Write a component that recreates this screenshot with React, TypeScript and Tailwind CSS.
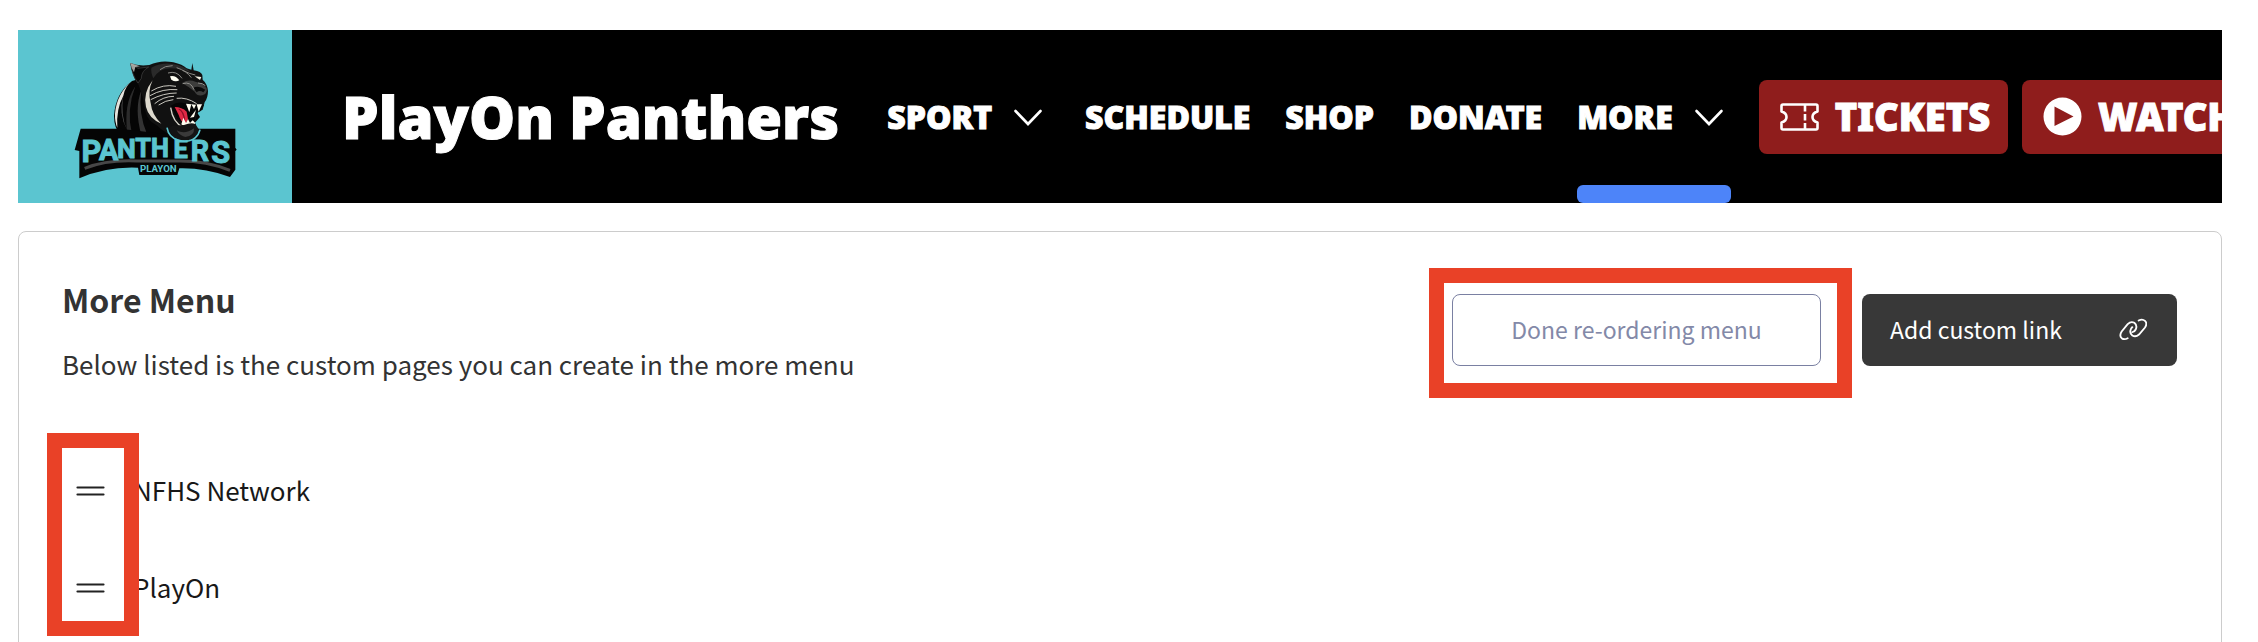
import type { ReactNode } from "react";

function PanthersLogo() {
  const letters = [
    { c: "P", x: 64, y: 336, s: 92 },
    { c: "A", x: 116, y: 330, s: 86 },
    { c: "N", x: 169, y: 324, s: 80 },
    { c: "T", x: 219, y: 319, s: 76 },
    { c: "H", x: 270, y: 319, s: 76 },
    { c: "E", x: 332, y: 323, s: 76 },
    { c: "R", x: 390, y: 331, s: 86 },
    { c: "S", x: 452, y: 338, s: 92 },
  ];
  return (
    <svg viewBox="0 -10 510 420" className="h-[140px] w-[170px]" role="img" aria-label="PlayOn Panthers logo">
      <path d="M186 92Q136 130 132 196Q132 232 152 256L320 280L390 200L300 60Z" fill="#050505" />
      <path d="M188 90Q140 130 135 190Q134 214 142 232Q138 176 160 136Q164 110 188 90Z" fill="#e5e3dc" />
      <path d="M160 136Q150 196 172 240Q144 190 160 136Z" fill="#555" />
      <path d="M196 108Q160 160 172 250L186 252Q168 180 196 108Z" fill="#2b2b2b" />
      <path d="M214 120Q192 176 214 254L232 254Q204 190 214 120Z" fill="#333" />
      <path
        d="M181 38Q204 48 238 44Q272 28 310 36Q338 42 350 54L364 58L367 38L371 60Q394 64 397 74L398 88Q412 100 414 122Q414 142 404 156L398 178L384 186L374 216Q382 226 378 242Q372 262 350 270Q326 274 310 258Q280 244 262 226Q232 212 226 182L218 140L206 104Q188 84 181 38Z"
        fill="#111"
      />
      <path d="M182 40L204 54L236 50Q214 62 214 84L204 98Q186 74 182 40Z" fill="#060606" stroke="#444" strokeWidth="2" />
      <path d="M181 38L210 48L196 50L192 66Q184 54 181 38Z" fill="#c9c7c0" opacity=".8" />
      <path d="M244 52Q282 32 324 44Q350 52 362 66Q336 54 300 54Q268 54 250 84Q242 66 244 52Z" fill="#2a2a2a" />
      <path d="M248 90Q218 128 228 170Q236 204 274 220Q246 194 242 158Q232 122 248 90Z" fill="#ddd9cd" />
      <path d="M270 58Q284 46 308 46M320 52Q350 62 364 82M338 60Q362 72 376 74M294 68Q320 60 336 84" fill="none" stroke="#8a8985" strokeWidth="3" />
      <path d="M300 78Q316 74 328 90Q316 96 304 88Z" fill="#fffef3" />
      <path d="M374 78L394 80L390 89Z" fill="#f2efe2" />
      <path d="M336 98Q356 86 376 94Q400 98 410 114Q412 126 404 132Q384 142 374 124Q358 110 336 98Z" fill="#3d3d3c" />
      <path d="M370 112Q386 104 406 118L400 126Q388 118 380 126Z" fill="#0a0a0a" />
      <path d="M338 100Q362 92 372 118M384 98Q398 98 406 106" fill="none" stroke="#92918d" strokeWidth="3" />
      <g fill="none" stroke="#eeece2" strokeWidth="2.500">
        <path d="M318 108Q280 100 244 122" />
        <path d="M322 118Q278 114 240 136" />
        <path d="M320 128Q280 128 242 148" />
        <path d="M312 138Q280 138 254 160" />
        <path d="M310 148Q286 150 266 164" />
        <path d="M320 144Q350 140 380 160" />
      </g>
      <path d="M302 166Q330 148 358 164L402 164L392 182L376 190L374 218Q344 228 322 206Z" fill="#050505" />
      <path d="M314 170Q336 170 350 184L354 206L346 222Q332 214 326 194Z" fill="#e02945" />
      <path d="M326 176Q342 182 344 214" fill="none" stroke="#8f1027" strokeWidth="4" />
      <g fill="#fffdf0">
        <path d="M348 160L364 162L358 186Z" />
        <path d="M364 162L378 163L372 176Z" />
        <path d="M380 162L396 162L386 184Z" />
        <path d="M378 178L372 200L360 202Z" />
        <path d="M334 222L340 202L348 218L354 206L360 218L368 210L376 218L370 226L342 228Z" />
      </g>
      <path d="M302 172Q308 216 340 232Q362 236 378 226" fill="none" stroke="#d9d6cc" strokeWidth="4" />
      <path
        d="M32 235H150L290 252L302 244Q316 272 350 272Q374 262 384 235H496V292L500 298L496 302V358L480 380Q404 352 328 354L322 374H208L204 352Q110 348 28 384V302L14 299Z"
        fill="#050505"
      />
      <path d="M44 354Q110 328 200 332H330Q410 332 480 360" fill="none" stroke="#474747" strokeWidth="9" />
      <g fill="#5bc5d0" stroke="#5bc5d0" strokeWidth="3" fontFamily="'Roboto',sans-serif" fontWeight="700" textAnchor="middle">
        {letters.map((l) => (
          <text key={l.c} x={l.x} y={l.y} fontSize={l.s}>
            {l.c}
          </text>
        ))}
        <text x="265" y="366" fontSize="29" strokeWidth="0">
          PLAYON
        </text>
      </g>
      <path d="M296 234Q300 258 326 268Q354 274 372 262Q384 252 386 236L376 222Q366 214 342 224L306 226Z" fill="#141414" />
      <path d="M320 240Q344 254 372 234Q374 256 346 260Q328 256 320 240Z" fill="#3a3a3a" />
      <path d="M291 232Q296 262 326 270Q358 278 376 262Q386 254 390 238" fill="none" stroke="#5bc5d0" strokeWidth="5" />
    </svg>
  );
}

function Chevron() {
  return (
    <svg viewBox="0 0 44 44" className="size-11" fill="none" stroke="currentColor" strokeWidth="2.600" strokeLinecap="round" aria-hidden="true">
      <path d="M9.500 16L22 29L34.500 16" />
    </svg>
  );
}

function TicketIcon() {
  return (
    <svg viewBox="0 0 39 28" className="h-7 w-[39px]" fill="none" stroke="currentColor" strokeWidth="2.600" strokeLinejoin="round" aria-hidden="true">
      <path d="M3 1.500H36Q37.500 1.500 37.500 3V8.500Q32.500 10 32.500 14T37.500 19.500V25Q37.500 26.500 36 26.500H3Q1.500 26.500 1.500 25V19.500Q6.500 18 6.500 14T1.500 8.500V3Q1.500 1.500 3 1.500Z" />
      <path d="M25 2V8.500M25 11V17.500M25 20V26" />
    </svg>
  );
}

function PlayIcon() {
  return (
    <svg viewBox="0 0 39 39" className="size-[39px]" aria-hidden="true">
      <path fillRule="evenodd" fill="currentColor" d="M19.500 .5A19 19 0 1 1 19.500 38.500A19 19 0 1 1 19.500 .5ZM11.500 9.500V29L30.500 19.500Z" />
    </svg>
  );
}

function LinkIcon() {
  return (
    <svg viewBox="88 92 84 68" className="h-[23px] w-7" fill="none" stroke="currentColor" strokeWidth="5.500" strokeLinecap="round" aria-hidden="true">
      <path d="M114 152Q104 158 96 152Q88 144 96 132L114 110Q124 100 134 106Q144 114 138 126Q134 134 128 134" />
      <path d="M147 99Q158 93 166 100Q174 108 166 120L148 141Q138 150 128 144Q118 136 124 124Q126 120 128 119" />
    </svg>
  );
}

function NavLink({ label, menu, active }: { label: string; menu?: boolean; active?: boolean }) {
  return (
    <a href="#" className="relative flex h-full items-center gap-[14px]">
      {label}
      {menu && <Chevron />}
      {active && <span className="absolute inset-x-0 bottom-0 h-[18px] rounded-md bg-[#4d84f9]" />}
    </a>
  );
}

function ActionButton({ label, icon }: { label: string; icon: ReactNode }) {
  return (
    <button type="button" className="flex h-[74px] items-center gap-4 rounded-lg bg-[#8f1d1c] pr-[18px] pl-[21px] text-[38px] font-black">
      {icon}
      {label}
    </button>
  );
}

function MenuRow({ label }: { label: string }) {
  return (
    <li className="flex h-[97px] items-center gap-7 text-[26px] text-[#181818]">
      <button type="button" aria-label={`Move ${label}`} className="ml-[14px] pt-0.5">
        <svg viewBox="0 0 29 12" className="h-3 w-[29px]" stroke="#222" strokeWidth="2.200" strokeLinecap="round" aria-hidden="true">
          <path d="M1.500 2.500H27.500M1.500 9.500H27.500" />
        </svg>
      </button>
      {label}
    </li>
  );
}

export default function App() {
  return (
    <div className="h-screen overflow-hidden bg-white pt-[30px] pr-9 pl-[18px] font-['Noto_Sans_CJK_SC',sans-serif]">
      <header className="flex h-[173px] items-center overflow-hidden bg-black font-['Noto_Sans',sans-serif] whitespace-nowrap text-white [-webkit-text-stroke:1px_white] *:shrink-0">
        <a href="#" className="flex h-full w-[274px] items-center justify-center bg-[#5bc5d0] [-webkit-text-stroke:0px]">
          <PanthersLogo />
        </a>
        <h1 className="ml-[50px] text-[58px] font-black">PlayOn Panthers</h1>
        <nav className="ml-12 flex h-full items-center gap-[35px] text-[32px] font-black">
          <NavLink label="SPORT" menu />
          <NavLink label="SCHEDULE" />
          <NavLink label="SHOP" />
          <NavLink label="DONATE" />
          <NavLink label="MORE" menu active />
        </nav>
        <div className="ml-7 flex items-center gap-[14px]">
          <ActionButton label="TICKETS" icon={<TicketIcon />} />
          <ActionButton label="WATCH" icon={<PlayIcon />} />
        </div>
      </header>

      <main className="mt-7 min-h-screen rounded-lg border border-[#ccc] pt-[46px] pr-11 pl-[43px]">
        <div className="flex items-start justify-between">
          <div className="text-[#333]">
            <h2 className="text-[32px] leading-[42px] font-bold">More Menu</h2>
            <p className="mt-6 text-[26px] leading-10">Below listed is the custom pages you can create in the more menu</p>
          </div>
          <div className="mt-4 flex gap-[41px] text-[23px]">
            <div className="relative">
              <button type="button" className="h-[72px] w-[369px] rounded-lg border border-[#7a80a2] pb-0.5 text-[#8389a8]">
                Done re-ordering menu
              </button>
              <span className="pointer-events-none absolute -top-[26px] -right-[31px] -bottom-8 -left-[23px] border-[15px] border-[#e94127]" />
            </div>
            <button type="button" className="flex h-[72px] w-[315px] items-center justify-between rounded-lg bg-[#383838] pr-[30px] pb-0.5 pl-7 text-white">
              Add custom link
              <LinkIcon />
            </button>
          </div>
        </div>
        <div className="relative mt-[57px]">
          <ul>
            <MenuRow label="NFHS Network" />
            <MenuRow label="PlayOn" />
          </ul>
          <span className="pointer-events-none absolute -top-2 -bottom-px -left-[15px] w-[92px] border-[15px] border-[#e94127]" />
        </div>
      </main>
    </div>
  );
}
